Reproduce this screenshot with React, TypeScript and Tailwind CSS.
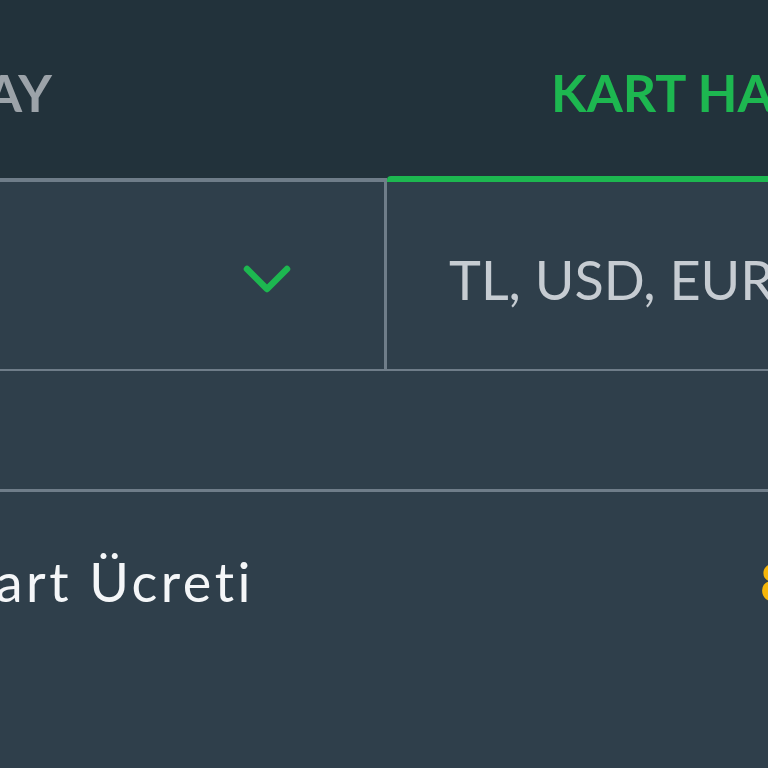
export default function App() {
  return (
    <div className="w-[768px] h-[768px] overflow-hidden bg-[#2f3f4b] font-['Lato','Noto_Sans',sans-serif]">
      {/* sekmeler */}
      <div className="flex h-[176px] bg-[#22323b]">
        <div className="w-[387px] shrink-0 flex justify-end pr-[335px] pt-[66px]">
          <span className="whitespace-nowrap text-[52px] leading-none font-bold text-[#9ca3a9]">
            HAVALE PAY
          </span>
        </div>
        <div className="flex-1 pl-[164px] pt-[66px]">
          <span className="whitespace-nowrap text-[52px] leading-none font-bold text-[#1db750]">
            KART HAREKETLERİ
          </span>
        </div>
      </div>

      {/* seçim satırı */}
      <div className="flex h-[195px] bg-[#22323b] border-b-[2px] border-[#6f7d89]">
        <div className="w-[387px] shrink-0 mt-[2px] bg-[#2f3f4b] border-t-[4px] border-r-[3px] border-[#6f7d89] flex justify-end items-start pr-[92px] pt-[81px]">
          <svg width="50" height="34" viewBox="0 0 50 34" fill="none">
            <path
              d="M5 6 L25 26 L45 6"
              stroke="#1db750"
              strokeWidth="6.5"
              strokeLinecap="round"
              strokeLinejoin="round"
            />
          </svg>
        </div>
        <div className="flex-1 bg-[#2f3f4b] border-t-[6px] border-[#1db750] rounded-tl-[4px] pl-[62px] pt-[71px]">
          <span className="whitespace-nowrap text-[54px] leading-none text-[#c6ccd2]">
            TL, USD, EUR
          </span>
        </div>
      </div>

      {/* boş satır */}
      <div className="h-[121px] border-b-[3px] border-[#6f7d89]" />

      {/* kart ücreti */}
      <div className="flex pt-[63px]">
        <div className="w-[254px] shrink-0 flex justify-end">
          <span className="whitespace-nowrap text-[54px] leading-none tracking-[3.5px] text-[#f4f6f8]">
            Kart Ücreti
          </span>
        </div>
        <div className="pl-[506px]">
          <span className="whitespace-nowrap text-[54px] leading-none font-bold text-[#f6b60a]">
            8,00 TL
          </span>
        </div>
      </div>
    </div>
  );
}
